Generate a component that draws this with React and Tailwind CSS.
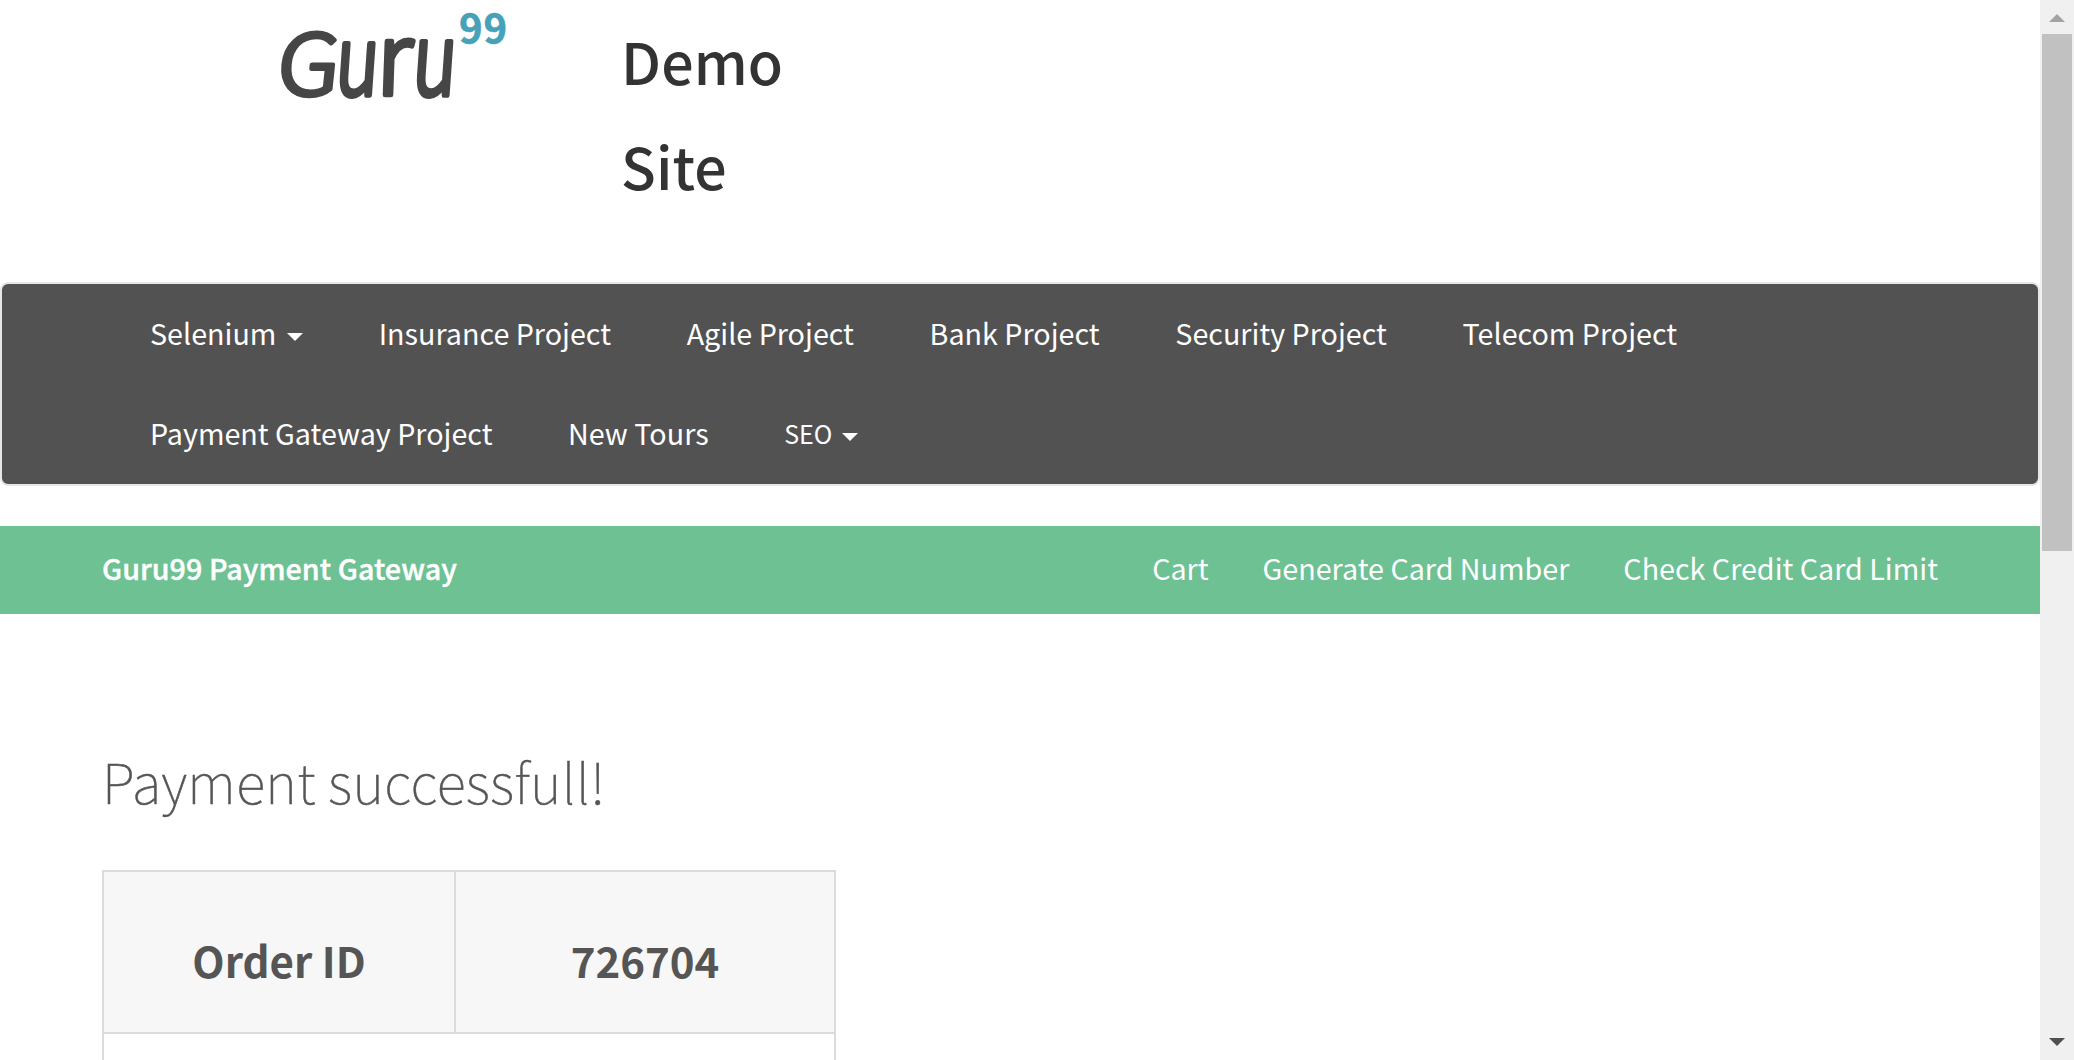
import React from "react";

function Caret() {
  return (
    <span className="mt-2 block h-0 w-0 border-x-8 border-t-8 border-x-transparent border-t-white" />
  );
}

function NavLink({ children }) {
  return (
    <a href="#" className="whitespace-nowrap text-[28.7px] leading-[98px] text-white">
      {children}
    </a>
  );
}

function Logo() {
  return (
    <svg className="block h-[110px] w-[236px] overflow-visible" viewBox="276 0 236 110" aria-label="Guru99">
      <g
        fill="#464646"
        stroke="#464646"
        strokeLinejoin="round"
        strokeLinecap="round"
        fontWeight="300"
        fontSize="60"
      >
        <text transform="translate(275 95) skewX(-6) scale(1.53 1.4)" strokeWidth="3">G</text>
        <text transform="translate(334 95) skewX(-4) scale(1.22 1.6)" strokeWidth="3.4">u</text>
        <text transform="translate(375 95) skewX(-2) scale(1.68 1.68)" strokeWidth="2.8">r</text>
        <text transform="translate(411 95) skewX(-4) scale(1.24 1.66)" strokeWidth="3.4">u</text>
      </g>
      <text x="459" y="43" fill="#45a2b8" stroke="#45a2b8" strokeWidth="0.6" fontSize="40" fontWeight="700" letterSpacing="1">99</text>
    </svg>
  );
}

function Header() {
  return (
    <header className="flex h-[282px] items-start pl-[276px]">
      <Logo />
      <h1 className="ml-[109px] mt-2 w-[170px] text-[57.3px] font-medium leading-[105px] tracking-[0.1px] text-[#333333]">
        Demo Site
      </h1>
    </header>
  );
}

function NavBar() {
  return (
    <nav className="h-[204px] rounded-lg border-2 border-[#e7e7e7] bg-[#525252] pl-[148px]">
      <div className="flex h-[100px] items-center gap-[75.7px] pb-[3px]">
        <div className="flex items-center gap-[10.6px]">
          <NavLink>Selenium</NavLink>
          <Caret />
        </div>
        <NavLink>Insurance Project</NavLink>
        <NavLink>Agile Project</NavLink>
        <NavLink>Bank Project</NavLink>
        <NavLink>Security Project</NavLink>
        <NavLink>Telecom Project</NavLink>
      </div>
      <div className="flex h-[100px] items-center gap-[75.6px] pb-[3px]">
        <NavLink>Payment Gateway Project</NavLink>
        <NavLink>New Tours</NavLink>
        <div className="flex items-center gap-[10px]">
          <a href="#" className="text-[25px] leading-[98px] text-white">SEO</a>
          <Caret />
        </div>
      </div>
    </nav>
  );
}

function GatewayBar() {
  return (
    <div className="mt-10 flex h-[88px] items-center justify-between bg-[#6ec193] px-[102px] pb-1 text-[28.7px] leading-[84px] text-white">
      <a href="#" className="font-medium tracking-[0.05px] [-webkit-text-stroke:0.4px_white]">Guru99 Payment Gateway</a>
      <div className="flex gap-[54px]">
        <a href="#">Cart</a>
        <a href="#">Generate Card Number</a>
        <a href="#">Check Credit Card Limit</a>
      </div>
    </div>
  );
}

function OrderTable() {
  return (
    <div className="ml-[102px] w-[734px] border-2 border-[#dbdbdb] text-center text-[42px] font-bold leading-[60px] text-[#555555]">
      <div className="flex h-[162px] border-b-2 border-[#dbdbdb] bg-[#f7f7f7]">
        <div className="w-[350px] pt-[58px]">Order ID</div>
        <div className="w-0.5 bg-[#dbdbdb]" />
        <div className="flex-1 pt-[58px]">726704</div>
      </div>
      <div className="h-40 bg-white" />
    </div>
  );
}

function ScrollBar() {
  return (
    <div className="flex h-full w-[34px] flex-col items-center bg-[#f0f0f0]">
      <div className="flex h-[34px] items-start pt-[14px]">
        <span className="block h-0 w-0 border-x-8 border-b-8 border-x-transparent border-b-[#a3a3a3]" />
      </div>
      <div className="h-[517px] w-[30px] bg-[#c1c1c1]" />
      <div className="mb-[14px] mt-auto">
        <span className="block h-0 w-0 border-x-8 border-t-8 border-x-transparent border-t-[#505050]" />
      </div>
    </div>
  );
}

export default function App() {
  return (
    <div className="flex h-[1060px] w-[2074px] overflow-hidden bg-white font-['Noto_Sans_CJK_SC','Noto_Sans',sans-serif]">
      <main className="h-full w-[2040px] overflow-hidden">
        <Header />
        <NavBar />
        <GatewayBar />
        <h2 className="mb-[49px] ml-[102px] mt-[127px] text-[54.5px] font-thin leading-[80px] tracking-[0.35px] text-[#555555] [-webkit-text-stroke:0.5px_#555555]">
          Payment successfull!
        </h2>
        <OrderTable />
      </main>
      <ScrollBar />
    </div>
  );
}
